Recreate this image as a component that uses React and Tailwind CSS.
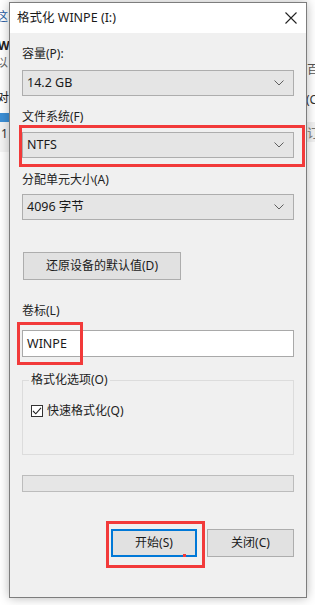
import React from "react";

const Chevron = () => (
  <svg width="10" height="6" viewBox="0 0 10 6" className="shrink-0">
    <path d="M0.5 0.5 L5 5 L9.5 0.5" fill="none" stroke="#5f5f5f" strokeWidth="1" />
  </svg>
);

const Combo = ({ value, children }) => (
  <div className="relative h-[26px] w-full border border-[#adadad] bg-[#e5e5e5] flex items-center justify-between pl-[4px] pr-[9px]">
    <span className="text-[12.5px] leading-4 text-[#1a1a1a]">{value}</span>
    <Chevron />
    {children}
  </div>
);

const Label = ({ text, className }) => (
  <div className={"h-4 text-[12px] leading-4 text-[#222] " + (className || "")}>{text}</div>
);

const RedBox = ({ className }) => (
  <div className={"absolute border-[3px] border-[#f23a3a] pointer-events-none " + className} />
);

export default function App() {
  return (
    <div className="relative w-[315px] h-[605px] overflow-hidden bg-white font-['Noto_Sans','Noto_Sans_CJK_SC',sans-serif]">
      {/* window behind the dialog */}
      <div className="absolute left-0 top-0 w-[9px] h-full text-[12px] leading-4">
        <div className="absolute left-[-4px] top-[9px] text-[#2b5fa6]">这</div>
        <div className="absolute left-[-2px] top-[38px] font-bold text-[#222]">WI</div>
        <div className="absolute left-[-4px] top-[55px] text-[#666]">以</div>
        <div className="absolute left-[-3px] top-[90px] text-[#222]">对</div>
        <div className="absolute left-0 top-[113px] w-full h-[9px] bg-[#3d8fd6]" />
        <div className="absolute left-0 top-[122px] w-full h-[30px] bg-[#f4f4f4]" />
        <div className="absolute left-[1px] top-[126px] text-[#333]">1</div>
      </div>
      <div className="absolute right-0 top-0 w-[9px] h-full text-[12px] leading-4">
        <div className="absolute left-[1px] top-[62px] text-[#555]">百</div>
        <div className="absolute left-0 top-[92px] text-[#333]">(C</div>
        <div className="absolute left-0 top-[122px] w-full h-[20px] bg-[#f2f2f2]" />
        <div className="absolute left-[1px] top-[126px] text-[#777]">订</div>
      </div>

      {/* dialog */}
      <div className="relative z-10 ml-[9px] mt-[2px] w-[298px] h-[596px] border border-[#7d7d7d] bg-[#f0f0f0] shadow-[0_0_10px_rgba(0,0,0,0.28)] flex flex-col">
        <div className="h-[30px] bg-white flex items-center justify-between pl-[7px] pr-[9px]">
          <span className="text-[12.5px] leading-4 text-[#1a1a1a]">格式化 WINPE (I:)</span>
          <svg width="12" height="12" viewBox="0 0 12 12">
            <path d="M0.5 0.5 L11.5 11.5 M11.5 0.5 L0.5 11.5" stroke="#222" strokeWidth="1.1" />
          </svg>
        </div>

        <div className="flex flex-col px-[12px] pt-[13px]">
          <Label text="容量(P):" />
          <div className="mt-[8px]">
            <Combo value="14.2 GB" />
          </div>

          <Label text="文件系统(F)" className="mt-[13px]" />
          <div className="mt-[7px]">
            <Combo value="NTFS">
              <RedBox className="left-[-4px] top-[-8px] w-[286px] h-[42px]" />
            </Combo>
          </div>

          <Label text="分配单元大小(A)" className="mt-[14px]" />
          <div className="mt-[6px]">
            <Combo value="4096 字节" />
          </div>

          <div className="mt-[32px] ml-[1px] w-[158px] h-[28px] border border-[#adadad] bg-[#e1e1e1] flex items-center justify-center text-[12px] leading-4 text-[#1a1a1a]">
            还原设备的默认值(D)
          </div>

          <Label text="卷标(L)" className="mt-[23px]" />
          <div className="relative mt-[11px] h-[27px] border border-[#a9a9a9] bg-white flex items-center pl-[4px] text-[12.5px] leading-4 text-[#1a1a1a]">
            WINPE
            <RedBox className="left-[-6px] top-[-9px] w-[66px] h-[43px]" />
          </div>

          <div className="relative mt-[23px] h-[75px] border border-[#dcdcdc]">
            <div className="absolute left-[6px] top-[-9px] px-[2px] bg-[#f0f0f0] text-[12px] leading-4 text-[#222]">
              格式化选项(O)
            </div>
            <div className="mt-[22px] ml-[8px] flex items-center gap-[4px]">
              <div className="w-[12px] h-[12px] border border-[#333] bg-white flex items-center justify-center">
                <svg width="10" height="10" viewBox="0 0 10 10">
                  <path d="M1 5 L3.8 7.8 L9 1.8" fill="none" stroke="#222" strokeWidth="1.1" />
                </svg>
              </div>
              <span className="text-[12px] leading-4 text-[#222]">快速格式化(Q)</span>
            </div>
          </div>

          <div className="mt-[20px] h-[17px] border border-[#bcbcbc] bg-[#e6e6e6]" />

          <div className="mt-[37px] flex justify-end gap-[10px]">
            <div className="relative w-[86px] h-[28px] border-2 border-[#0078d7] bg-[#e1e1e1] flex items-center justify-center text-[12px] leading-4 text-[#1a1a1a]">
              开始(S)
              <div className="absolute left-[70px] top-[23px] w-[3px] h-[3px] bg-[#f23a3a]" />
              <RedBox className="left-[-7px] top-[-10px] w-[99px] h-[47px]" />
            </div>
            <div className="w-[87px] h-[28px] border border-[#adadad] bg-[#e1e1e1] flex items-center justify-center text-[12px] leading-4 text-[#1a1a1a]">
              关闭(C)
            </div>
          </div>
        </div>
      </div>
    </div>
  );
}
